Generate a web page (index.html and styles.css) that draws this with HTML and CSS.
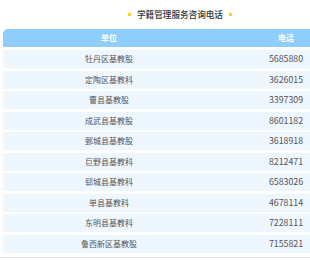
FILE: index.html
```html
<!DOCTYPE html>
<html lang="zh">
<head>
<meta charset="utf-8">
<link rel="stylesheet" href="styles.css">
</head>
<body>
<div class="page">
  <h2 class="title"><span class="dot"></span>学籍管理服务咨询电话<span class="dot"></span></h2>
  <div class="table">
    <div class="row head"><div>单位</div><div>电话</div></div>
    <div class="row"><div>牡丹区基教股</div><div class="num">5685880</div></div>
    <div class="row"><div>定陶区基教科</div><div class="num">3626015</div></div>
    <div class="row"><div>曹县基教股</div><div class="num">3397309</div></div>
    <div class="row"><div>成武县基教股</div><div class="num">8601182</div></div>
    <div class="row"><div>鄄城县基教股</div><div class="num">3618918</div></div>
    <div class="row"><div>巨野县基教科</div><div class="num">8212471</div></div>
    <div class="row"><div>郓城县基教科</div><div class="num">6583026</div></div>
    <div class="row"><div>单县基教科</div><div class="num">4678114</div></div>
    <div class="row"><div>东明县基教科</div><div class="num">7228111</div></div>
    <div class="row"><div>鲁西新区基教股</div><div class="num">7155821</div></div>
  </div>
  <div class="rule"></div>
</div>
</body>
</html>
```
FILE: styles.css
```css
html, body {
  margin: 0;
  padding: 0;
  overflow: hidden;
  background: #fff;
}
body {
  width: 310px;
  height: 260px;
  font-family: "Noto Sans CJK SC", "Noto Sans", sans-serif;
}
.page {
  width: 360px;
  padding-top: 6px;
}
.title {
  margin: 0;
  height: 17px;
  display: flex;
  align-items: center;
  justify-content: center;
  gap: 6.5px;
  font-size: 8.6px;
  font-weight: 500;
  color: #333;
  line-height: 17px;
}
.dot {
  width: 3px;
  height: 3px;
  background: #f7d51d;
}
.table {
  margin: 6px 0 0 3px;
  width: 354px;
  display: flex;
  flex-direction: column;
  gap: 2.55px;
}
.row {
  display: grid;
  grid-template-columns: 212px 142px;
  height: 18px;
  align-items: center;
  background: #eef6fe;
  font-size: 8px;
  color: #555;
  text-align: center;
  line-height: 18px;
}
.row .num {
  font-size: 8.8px;
}
.row.head {
  background: #8ecdfc;
  color: #fff;
  font-weight: 700;
  font-size: 8px;
  border-top-left-radius: 5px;
  border-top-right-radius: 5px;
  margin-bottom: 0.5px;
}
.rule {
  margin-top: 4px;
  height: 1px;
  background: #e6e6e6;
  width: 360px;
}
```
